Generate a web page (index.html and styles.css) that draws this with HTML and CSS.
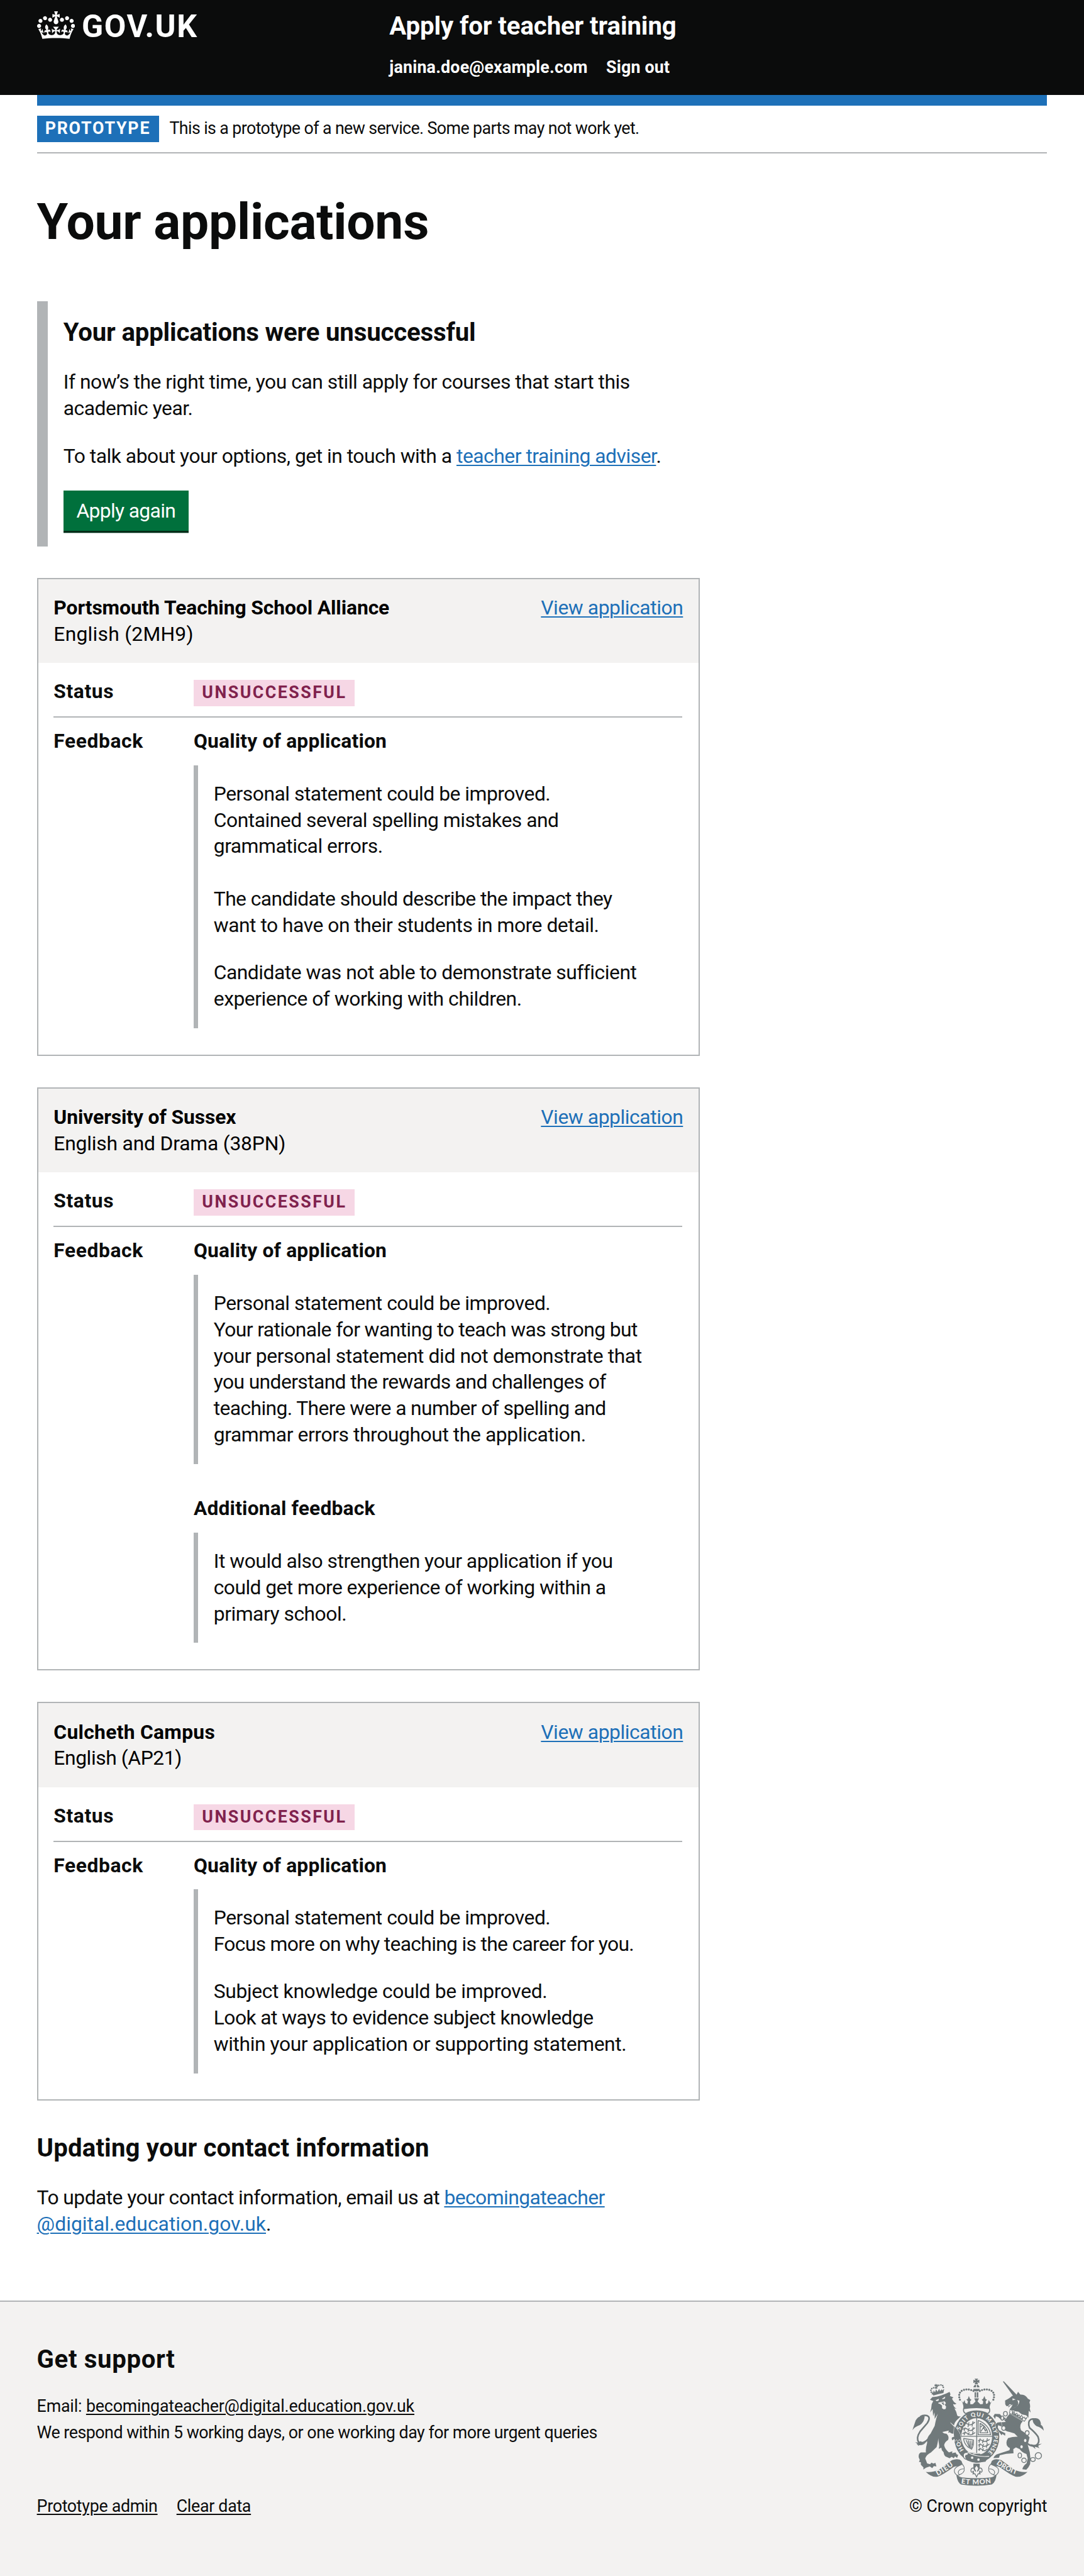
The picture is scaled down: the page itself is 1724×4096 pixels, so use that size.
FILE: index.html
```html
<!DOCTYPE html>
<html lang="en">
<head>
<meta charset="utf-8">
<title>Your applications</title>
<link rel="stylesheet" href="styles.css">
</head>
<body>
<header class="header">
  <div class="container header-inner">
    <a class="logo" href="#">
      <svg class="logo-crown" viewBox="0 0 132 97" aria-hidden="true"><path fill="currentColor" d="M25 30.2c3.5 1.5 7.7-.2 9.1-3.7 1.5-3.6-.2-7.8-3.9-9.2-3.6-1.4-7.6.3-9.1 3.9-1.4 3.5.3 7.5 3.9 9zM9 39.5c3.6 1.5 7.8-.2 9.2-3.7 1.5-3.6-.2-7.8-3.9-9.1-3.6-1.5-7.6.2-9.1 3.8-1.4 3.5.3 7.5 3.8 9zM4.4 57.2c3.5 1.5 7.7-.2 9.1-3.8 1.5-3.6-.2-7.7-3.9-9.1-3.5-1.5-7.6.3-9.1 3.8-1.4 3.5.3 7.6 3.9 9.1zm38.3-21.4c3.5 1.5 7.7-.2 9.1-3.8 1.5-3.6-.2-7.7-3.9-9.1-3.6-1.5-7.6.3-9.1 3.8-1.3 3.6.4 7.7 3.9 9.1zm64.4-5.6c-3.6 1.5-7.8-.2-9.1-3.7-1.5-3.6.2-7.8 3.8-9.2 3.6-1.4 7.7.3 9.2 3.9 1.3 3.5-.4 7.5-3.9 9zm15.9 9.3c-3.6 1.5-7.7-.2-9.1-3.7-1.5-3.6.2-7.8 3.7-9.1 3.6-1.5 7.7.2 9.2 3.8 1.5 3.5-.3 7.5-3.8 9zm4.7 17.7c-3.6 1.5-7.8-.2-9.2-3.8-1.5-3.6.2-7.7 3.9-9.1 3.6-1.5 7.7.3 9.2 3.8 1.3 3.5-.4 7.6-3.9 9.1zM89.3 35.8c-3.6 1.5-7.8-.2-9.2-3.8-1.4-3.6.2-7.7 3.9-9.1 3.6-1.5 7.7.3 9.2 3.8 1.4 3.6-.3 7.7-3.9 9.1zM69.7 17.7l8.9 4.7V9.3l-8.9 2.8c-.2-.3-.5-.6-.9-.9L72.4 0H59.6l3.5 11.2c-.3.3-.6.5-.9.9l-8.8-2.8v13.1l8.8-4.7c.3.3.6.7.9.9l-5 15.4v.1c-.2.8-.4 1.6-.4 2.4 0 4.1 3.1 7.5 7 8.1h.2c.3 0 .7.1 1 .1.4 0 .7 0 1-.1h.2c4-.6 7.1-4.1 7.1-8.1 0-.8-.1-1.7-.4-2.4V34l-5.1-15.4c.4-.2.7-.6 1-.9zM66 92.8c16.9 0 32.8 1.1 47.1 3.2 4-16.9 8.9-26.7 14-33.5l-9.6-3.4c1 4.9 1.1 7.2 0 10.2-1.5-1.4-3-4.3-4.2-8.7L108.6 76c2.8-2 5-3.2 7.5-3.3-4.4 9.4-10 11.9-13.6 11.2-4.3-.8-6.3-4.6-5.6-7.9 1-4.7 5.7-5.9 8-.5 4.3-8.7-3-11.4-7.6-8.8 7.1-7.2 7.9-13.5 2.1-21.1-8 6.1-8.1 12.3-4.5 20.8-4.7-5.4-12.1-2.5-9.5 6.2 3.4-5.2 7.9-2 7.2 3.1-.6 4.3-6.4 7.8-13.5 7.2-10.3-.9-10.9-8-11.2-13.8 2.5-.5 7.1 1.8 11 7.3L80.2 60c-4.1 4.4-8 5.3-12.3 5.4 1.4-4.4 8-11.6 8-11.6H55.5s6.4 7.2 7.9 11.6c-4.2-.1-8-1-12.3-5.4l1.4 16.4c3.9-5.5 8.5-7.7 10.9-7.3-.3 5.8-.9 12.8-11.1 13.8-7.2.6-12.9-2.9-13.5-7.2-.7-5 3.8-8.3 7.1-3.1 2.7-8.7-4.6-11.6-9.4-6.2 3.7-8.5 3.6-14.7-4.6-20.8-5.8 7.6-5 13.9 2.2 21.1-4.7-2.6-11.9.1-7.7 8.8 2.3-5.5 7.1-4.2 8.1.5.7 3.3-1.3 7.1-5.7 7.9-3.5.7-9-1.8-13.5-11.2 2.5.1 4.7 1.3 7.5 3.3l-4.7-15.4c-1.2 4.4-2.7 7.2-4.3 8.7-1.1-3-.9-5.3 0-10.2l-9.5 3.4c5 6.9 9.9 16.7 14 33.5 14.8-2.1 30.8-3.2 47.7-3.2z"/></svg>
      <span>GOV.UK</span>
    </a>
    <div class="header-content">
      <a class="service-name" href="#">Apply for teacher training</a>
      <nav class="header-nav">
        <a href="#">janina.doe@example.com</a>
        <a href="#">Sign out</a>
      </nav>
    </div>
  </div>
</header>

<div class="container">
  <div class="phase-banner">
    <strong class="phase-tag">PROTOTYPE</strong>
    <span>This is a prototype of a new service. Some parts may not work yet.</span>
  </div>

  <main class="main">
    <h1>Your applications</h1>

    <section class="inset">
      <h2>Your applications were unsuccessful</h2>
      <p>If now’s the right time, you can still apply for courses that start this<br>academic year.</p>
      <p>To talk about your options, get in touch with a <a class="link" href="#">teacher training adviser</a>.</p>
      <a class="button" href="#">Apply again</a>
    </section>

    <article class="card">
      <header class="card-header">
        <div><h3>Portsmouth Teaching School Alliance</h3><span class="wide-2">English (2MH9)</span></div>
        <a class="link" href="#">View application</a>
      </header>
      <div class="card-body">
        <div class="row">
          <h4 class="wide">Status</h4>
          <div><strong class="tag">UNSUCCESSFUL</strong></div>
        </div>
        <div class="row">
          <h4 class="wide">Feedback</h4>
          <div>
            <h4>Quality of application</h4>
            <blockquote>
              <p>Personal statement could be improved.<br>Contained several spelling mistakes and<br>grammatical errors.<br><br><span class="snug">The candidate should describe the impact they</span><br>want to have on their students in more detail.</p>
              <p>Candidate was not able to demonstrate sufficient<br>experience of working with children.</p>
            </blockquote>
          </div>
        </div>
      </div>
    </article>

    <article class="card">
      <header class="card-header">
        <div><h3>University of Sussex</h3><span class="wide-1">English and Drama (38PN)</span></div>
        <a class="link" href="#">View application</a>
      </header>
      <div class="card-body">
        <div class="row">
          <h4 class="wide">Status</h4>
          <div><strong class="tag">UNSUCCESSFUL</strong></div>
        </div>
        <div class="row">
          <h4 class="wide">Feedback</h4>
          <div>
            <h4>Quality of application</h4>
            <blockquote>
              <p>Personal statement could be improved.<br><span class="tight">Your rationale for wanting to teach was strong but</span><br><span class="loose">your personal statement did not demonstrate that</span><br><span class="tight">you understand the rewards and challenges of<br>teaching. There were a number of spelling and</span><br><span class="loose">grammar errors throughout the application.</span></p>
            </blockquote>
            <h4 class="next">Additional feedback</h4>
            <blockquote>
              <p>It would also strengthen your application if you<br><span class="snug">could get more experience of working within a</span><br>primary school.</p>
            </blockquote>
          </div>
        </div>
      </div>
    </article>

    <article class="card">
      <header class="card-header">
        <div><h3 class="wide-h">Culcheth Campus</h3><span class="loose">English (AP21)</span></div>
        <a class="link" href="#">View application</a>
      </header>
      <div class="card-body">
        <div class="row">
          <h4 class="wide">Status</h4>
          <div><strong class="tag">UNSUCCESSFUL</strong></div>
        </div>
        <div class="row">
          <h4 class="wide">Feedback</h4>
          <div>
            <h4>Quality of application</h4>
            <blockquote>
              <p>Personal statement could be improved.<br><span class="tighter">Focus more on why teaching is the career for you.</span></p>
              <p><span class="looser">Subject knowledge could be improved.</span><br><span class="snug">Look at ways to evidence subject knowledge</span><br><span class="loose">within your application or supporting statement.</span></p>
            </blockquote>
          </div>
        </div>
      </div>
    </article>

    <section class="contact">
      <h2>Updating your contact information</h2>
      <p><span class="snug">To update your contact information, email us at <a class="link" href="#">becomingateacher</a></span><br><a class="link wide-0" href="#">@digital.education.gov.uk</a>.</p>
    </section>
  </main>
</div>

<footer class="footer">
  <div class="container footer-inner">
    <div class="footer-text">
      <h2>Get support</h2>
      <p><span class="footer-email">Email: <a class="link" href="#">becomingateacher@digital.education.gov.uk</a></span><br>We respond within 5 working days, or one working day for more urgent queries</p>
      <nav class="footer-nav"><a class="link" href="#">Prototype admin</a><a class="link" href="#">Clear data</a></nav>
    </div>
    <div class="copyright">
      <svg class="crest" viewBox="162 119 750 613" aria-hidden="true">
        <defs>
          <path id="garter-top" d="M434 423A98 117 0 0 1 624 423"/>
          <path id="garter-right" d="M621 410A98 117 0 0 1 588 545"/>
          <path id="garter-left" d="M464 538A98 117 0 0 1 431 455"/>
          <path id="scroll-left" d="M306 674Q352 650 404 609"/>
          <path id="scroll-mid" d="M440 718Q527 731 616 715"/>
          <path id="scroll-right" d="M640 606Q702 653 766 670"/>
        </defs>
        <!-- lion tail -->
        <path class="line" stroke-width="9" d="M275 436Q230 500 199 484Q180 460 206 421L247 373Q268 340 246 331Q226 325 206 337"/>
        <path d="M232 333Q196 328 181 357Q176 371 162 413Q176 394 204 385Q225 371 230 346ZM211 476Q190 489 178 482Q184 491 190 489Q184 500 195 497Q190 507 201 500Q228 501 241 480L222 491Z"/>
        <!-- lion -->
        <path d="M262 240L276 225Q325 221 374 195L379 208L376 219L396 227L388 234Q395 253 413 263Q405 270 394 264Q398 284 414 291L402 290Q413 307 418 331Q427 338 438 334Q425 348 414 358Q398 377 401 388L379 371L425 421Q441 444 438 478L430 465L421 478L415 466L405 476L402 463L389 472L386 459Q390 451 400 452L398 434Q385 436 375 426L366 429L370 416L333 424Q338 433 356 434Q373 448 366 469Q345 483 343 500Q347 522 370 541L390 535L388 545L409 541L413 551L423 555L417 572L405 563L398 574L386 566L374 574L358 567Q342 563 340 540L330 528L327 514L312 520L315 505L309 460Q309 479 300 510L268 541Q242 554 235 575L246 604L263 608L270 599L282 605L293 600L299 621L284 619L275 631L261 621L240 628L224 639L225 627L210 611L210 597L199 595L204 584L198 570Q195 548 210 541L239 541Q236 520 246 485Q242 455 265 434L289 389Q297 345 307 320L289 350L288 312L280 334L277 293L263 313Q270 294 272 265L281 247Z"/>
        <path class="paper" d="M294 243L313 235L311 246L300 248ZM330 235L349 222L348 232L337 237ZM311 256L346 249L353 259L347 270L354 279L352 292L341 295L331 289V273L320 264L309 261Z"/>
        <path d="M327 257L342 255L338 264L347 264L340 271L335 266Z"/>
        <!-- lion crown -->
        <path d="M281 216L273 192L281 200L283 186L291 198L297 180L305 194L315 177L319 191L330 180L332 187L343 178L339 202Q312 207 281 216Z"/>
        <path class="line dots small-dots" stroke-width="9" d="M276 206Q258 185 277 173Q292 168 299 177Q301 159 318 156Q343 153 337 179"/>
        <path d="M289 152L295 154L296 148L300 154L307 152V163L300 162L303 176L295 177L296 164L288 163Z"/>
        <!-- unicorn tail -->
        <path class="line" stroke-width="9" d="M819 490Q844 512 869 500Q892 485 879 451Q862 426 831 401Q817 363 839 352Q857 345 875 359"/>
        <path d="M847 347Q876 340 888 356Q898 373 895 384Q909 389 912 417Q899 399 871 391Q850 377 849 359ZM834 493Q848 509 865 522L860 509Q878 512 888 518Q878 507 882 501L901 491Q874 497 857 498Z"/>
        <!-- unicorn -->
        <path d="M678 136L684 135L758 212L739 221ZM691 245Q720 230 730 219L755 214L765 194L778 211Q807 210 821 234L835 242L830 255Q837 275 832 290L837 313L826 303L824 343L812 329L787 324L767 308Q738 306 719 293Q730 279 734 267L719 275L710 286L709 277L698 276L692 266Z"/>
        <path class="paper" d="M733 232L751 238L734 244ZM760 242Q781 274 731 292Q773 279 773 246ZM718 265L727 269L708 276L715 285L704 279Z"/>
        <path d="M717 320L792 363Q769 384 782 414Q822 438 831 456L820 496L832 540L836 576L834 607L824 626L812 640L790 637Q792 619 814 603L820 575L813 550Q789 543 774 522L753 512L738 522L739 546Q700 545 661 557L656 571L624 573Q633 554 650 550L716 528L719 517Q691 503 701 473L708 459Q736 450 763 451L744 432L717 424Q686 421 669 393L651 386L649 399L657 414L678 426L692 431L691 446L676 435L671 443L657 424L640 404L635 380L648 370L695 367L684 354L667 353L653 340L638 334L634 350L624 334L632 321L661 322L675 338L697 345Z"/>
        <!-- unicorn collar -->
        <path class="hollow" stroke-width="4" d="M720 294L716 316L801 363L815 343L804 347L800 339L793 343L785 329L778 339L771 326L765 333L758 317L748 326L743 308L734 312L731 301Z"/>
        <path d="M729 320L734 304L742 321L750 318L755 329L766 325L768 339L779 336L781 346L793 342L792 355Z"/>
        <!-- garter and shield -->
        <ellipse cx="529" cy="451" rx="129" ry="149"/>
        <ellipse class="hollow" stroke-width="4" cx="529" cy="450" rx="90" ry="107"/>
        <path class="line" stroke-width="5" d="M529 344V555M440 449H618"/>
        <g class="line" stroke-width="5">
          <path d="M454 385Q467 369 479 380T519 368M467 369L458 391M485 369L479 396M508 363L502 393M449 410Q465 397 479 411T519 400M463 398L457 419M486 403L479 423M509 396L503 420M448 435Q463 421 479 435T520 427M464 421L457 442M487 427L478 441M509 420L503 441"/>
          <path d="M537 476Q548 463 561 474T603 467M549 461L542 486M568 466L561 488M590 460L585 484M537 501Q548 488 561 501T602 493M549 490L542 512M568 492L561 516M590 486L584 514M537 527Q548 513 561 526T590 520M549 515L543 531M568 518L561 533"/>
          <path d="M537 358V440H608Q600 382 537 358M548 374V429H592Q586 394 548 374M552 397Q567 374 570 397T587 411M553 421L568 398L580 421"/>
          <path d="M454 461L510 470Q514 496 500 522L479 510Q456 490 454 461M468 470L487 510M480 472L493 516M491 474L499 515M502 475L504 501"/>
        </g>
        <path d="M449 540L458 530L479 541L505 544L549 548L556 564L594 570L579 594L528 600L473 586Z"/>
        <path class="hollow" stroke-width="5" d="M469 540Q449 544 453 564Q457 583 475 577Q461 570 467 558Q485 557 480 542Z"/>
        <path class="line pale" stroke-width="4" d="M477 540Q525 569 600 563M507 549L551 544"/>
        <circle class="paper" cx="503" cy="571" r="7"/><circle class="paper" cx="539" cy="582" r="7"/>
        <g class="motto garter-text">
          <text><textPath href="#garter-top" startOffset="8" textLength="262">SOIT QUI MAL</textPath></text>
          <text><textPath href="#garter-right" startOffset="3" textLength="138">Y PENSE</textPath></text>
          <text><textPath href="#garter-left" startOffset="14" textLength="54">HO</textPath></text>
        </g>
        <!-- lion and unicorn feet resting over the garter -->
        <path class="rim" stroke-width="4" d="M401 388L424 419Q441 440 438 478L430 465L421 478L415 466L405 476L402 463L389 472L386 459Q390 451 400 452L398 434Z"/>
        <path class="line pale" stroke-width="3" d="M379 371L406 396"/>
        <path class="rim" stroke-width="4" d="M624 334L632 321L661 322L675 338L697 345L684 354L667 353L653 340L638 334L634 350ZM648 370L669 368L672 393L651 386L649 399L657 414L692 431L691 446L676 435L671 443L657 424L640 404L635 380Z"/>
        <!-- chain -->
        <g class="hollow" stroke-width="5"><ellipse cx="693" cy="320" rx="11" ry="13"/><ellipse cx="675" cy="345" rx="8" ry="12"/><ellipse cx="683" cy="402" rx="11" ry="13"/><ellipse cx="817" cy="430" rx="11" ry="13"/><ellipse cx="775" cy="558" rx="10" ry="14"/><circle cx="799" cy="586" r="13"/><ellipse cx="850" cy="581" rx="13" ry="11"/><circle cx="881" cy="560" r="18"/></g>
        <g class="paper"><ellipse cx="806" cy="473" rx="7" ry="9"/><ellipse cx="785" cy="509" rx="7" ry="9"/></g>
        <!-- royal crown -->
        <path class="hollow" stroke-width="6" d="M455 288Q449 311 466 319Q527 290 592 319Q608 311 601 288Q527 274 455 288Z"/>
        <path d="M440 244L451 257L460 242L463 258L475 264L479 248L470 239L478 236L484 219L491 236L499 240L491 249L493 266L507 265L522 250L515 232H542L534 250L550 266L564 264L566 248L557 240L565 236L573 219L579 236L588 240L580 249L582 264L593 260L597 242L608 258L619 245Q600 269 603 294Q527 281 453 294Q456 268 440 244Z"/>
        <path class="line dots" stroke-width="12" d="M433 240Q420 201 447 187Q480 173 514 192M624 240Q637 201 610 187Q577 173 543 192"/>
        <path d="M509 178H546Q544 192 528 193Q511 192 509 178ZM517 197H525V228H517ZM529 197H538V228H529ZM510 169Q513 155 525 153V169ZM530 153Q542 155 545 169H530Z"/>
        <path d="M517 120H537L531 130L544 126V145L532 140L537 151H517L522 140L510 145V126L523 131Z"/>
        <!-- fleur-de-lis -->
        <path d="M510 605H546V628H510Z"/>
        <path class="hollow" stroke-width="5" d="M528 613L516 630Q519 642 524 649Q512 640 513 630Q494 628 496 648Q502 661 509 648Q514 656 508 663L519 663L528 681L537 663L548 663Q542 656 547 648Q554 661 560 648Q562 628 543 630Q544 640 532 649Q538 642 540 630Z"/>
        <!-- motto scroll -->
        <path d="M238 652Q275 657 315 639Q360 605 388 585Q423 571 442 590L455 624Q417 616 397 624Q335 669 307 679Q275 687 238 652Z"/>
        <path d="M819 652Q782 657 742 639Q697 605 669 585Q634 571 615 590L602 624Q640 616 660 624Q722 669 750 679Q782 687 819 652Z"/>
        <path d="M412 661Q422 678 445 684Q527 693 610 684Q632 678 643 661Q639 711 615 724Q527 738 440 724Q416 711 412 661Z"/>
        <path class="hollow" stroke-width="4" d="M428 617Q402 627 401 645Q401 661 418 672L430 669Q417 654 430 642Q440 633 457 636Q461 624 446 608ZM629 617Q655 627 654 645Q654 661 637 672L625 669Q638 654 625 642Q615 633 598 636Q594 624 609 608Z"/>
        <path class="line" stroke-width="4" d="M459 638Q456 661 428 669M596 638Q599 661 627 669"/>
        <g class="motto scroll-text">
          <text><textPath href="#scroll-left" textLength="108">DIEU</textPath></text>
          <text><textPath href="#scroll-mid" textLength="172">ET MON</textPath></text>
          <text><textPath href="#scroll-right" textLength="130">DROIT</textPath></text>
        </g>
      </svg>
      <a href="#">© Crown copyright</a>
    </div>
  </div>
</footer>
</body>
</html>
```
FILE: styles.css
```css
/* 1rem is ten layout units; the page is 103rem wide.
   Borders are whole pixels, and the padding beside them takes up the difference. */
html { font-size: 16.738px; }
* { box-sizing: border-box; }
body {
  --rule: 2px;
  margin: 0;
  background: #fff;
  color: #0b0c0c;
  font: 400 1.9rem/2.5rem Roboto, "Liberation Sans", sans-serif;
  letter-spacing: -.015em;
  white-space: nowrap;
}
h1, h2, h3, h4, p, blockquote { margin: 0; }
a { color: inherit; text-decoration: none; }
h1 { font-size: 4.8rem; line-height: 5rem; letter-spacing: -.003em; }
h2 { font-size: 2.4rem; line-height: 3rem; letter-spacing: -.004em; }
h3, h4 { font-size: 1.9rem; line-height: 2.5rem; letter-spacing: -.003em; }
h4 { letter-spacing: .005em; }

.container { width: 96rem; margin: 0 3.5rem; }
.link {
  color: #1d70b8;
  text-decoration: underline;
  text-decoration-thickness: .1rem;
  text-underline-offset: .15rem;
}

/* tracking adjustments */
.tighter { letter-spacing: -.021em; }
.tight { letter-spacing: -.019em; }
.snug { letter-spacing: -.0175em; }
.loose { letter-spacing: -.0128em; }
.looser { letter-spacing: -.011em; }
.wide-0 { letter-spacing: .001em; }
.wide-1 { letter-spacing: -.006em; }
.wide-2 { letter-spacing: .008em; }
.wide { letter-spacing: .018em; }
.wide-h { letter-spacing: .009em; }

.header { height: 9rem; background: #0b0c0c; color: #fff; font-weight: 700; }
.header-inner { display: flex; padding-top: 1rem; }
.logo {
  display: flex;
  gap: .67rem;
  width: 33.5rem;
  font-size: 3rem;
  line-height: 3rem;
  letter-spacing: .031em;
}
.logo-crown { width: 3.6rem; height: 2.65rem; margin-top: .05rem; }
.service-name { display: block; font-size: 2.4rem; line-height: 3rem; letter-spacing: -.0025em; }
.header-nav {
  display: flex;
  gap: 1.75rem;
  margin-top: 1.45rem;
  font-size: 1.6rem;
  line-height: 2rem;
  letter-spacing: .007em;
}

.phase-banner {
  display: flex;
  align-items: center;
  gap: 1rem;
  padding: calc(2rem - 17px) 0 calc(1.1rem - var(--rule));
  border-top: 17px solid #1d70b8;
  border-bottom: var(--rule) solid #b1b4b6;
  font-size: 1.6rem;
  letter-spacing: -.0223em;
}
.phase-tag {
  width: 11.6rem;
  padding-left: .78rem;
  background: #1d70b8;
  color: #fff;
  letter-spacing: .067em;
}

.main { width: 63rem; padding-top: 4rem; }
.inset {
  margin-top: 5rem;
  padding: 1.5rem 1.5rem 1.5rem calc(2.52rem - 17px);
  border-left: 17px solid #b1b4b6;
}
.inset p { margin: 2rem 0; }
.button {
  display: block;
  width: 11.9rem;
  height: 3.8rem;
  padding-top: .7rem;
  background: #00703c;
  box-shadow: 0 .2rem 0 #002d18;
  color: #fff;
  text-align: center;
  letter-spacing: -.02em;
}

.card {
  margin-top: 3rem;
  padding-bottom: calc(2.6rem - var(--rule));
  border: var(--rule) solid #b1b4b6;
}
.card-header {
  display: flex;
  justify-content: space-between;
  height: calc(8.1rem - var(--rule));
  padding: calc(1.64rem - var(--rule)) calc(1.6rem - var(--rule)) 0;
  background: #f3f2f1;
  color: #000;
}
.card-header .link { letter-spacing: -.0135em; }
.card-body { padding: .5rem calc(1.7rem - var(--rule)) 0 calc(1.6rem - var(--rule)); }
.row { display: grid; grid-template-columns: 13.3rem 1fr; padding-top: 1rem; }
.row:first-child {
  padding-bottom: calc(1.2rem - var(--rule));
  border-bottom: var(--rule) solid #b1b4b6;
}
.row:first-child > * { height: 2.5rem; }
.tag {
  display: block;
  width: 15.3rem;
  margin-top: .1rem;
  padding-left: .8rem;
  background: #f6d7e5;
  color: #80224d;
  font-size: 1.6rem;
  letter-spacing: .092em;
}
blockquote {
  margin-top: 1rem;
  padding: 1.5rem 0 1.5rem calc(1.9rem - 7px);
  border-left: 7px solid #b1b4b6;
}
blockquote p + p { margin-top: 2rem; }
.next { margin-top: 3rem; }

.contact { margin-top: 3rem; }
.contact h2 { letter-spacing: .004em; }
.contact p { margin-top: 2rem; }

.footer {
  height: 26.2rem;
  margin-top: 6rem;
  padding-top: calc(4.1rem - var(--rule));
  border-top: var(--rule) solid #b1b4b6;
  background: #f3f2f1;
  font-size: 1.6rem;
}
.footer .link { color: inherit; }
.footer-inner { display: flex; justify-content: space-between; align-items: flex-end; }
.footer h2 { letter-spacing: .016em; }
.footer p { margin-top: 1.7rem; letter-spacing: -.0177em; }
.footer-email { letter-spacing: -.0058em; }
.footer-nav { display: flex; gap: 1.8rem; margin-top: 4.5rem; letter-spacing: -.011em; }
.copyright {
  display: flex;
  flex-direction: column;
  align-items: flex-end;
  gap: .7rem;
  letter-spacing: -.005em;
}

.crest { width: 12.5rem; height: 10.2rem; margin-right: .3rem; fill: #70797b; overflow: visible; }
.crest .paper { fill: #f3f2f1; }
.crest .line { fill: none; stroke: #70797b; }
.crest .hollow { fill: #f3f2f1; stroke: #70797b; }
.crest .line.pale { stroke: #f3f2f1; }
.crest .rim { stroke: #f3f2f1; paint-order: stroke; }
.crest .dots { stroke-linecap: round; stroke-dasharray: 0 14; }
.crest .small-dots { stroke-dasharray: 0 11; }
.crest .motto { fill: #f3f2f1; font-family: Lato, sans-serif; font-weight: 900; letter-spacing: 0; }
.crest .garter-text { font-size: 32px; }
.crest .scroll-text { font-size: 40px; }
```
